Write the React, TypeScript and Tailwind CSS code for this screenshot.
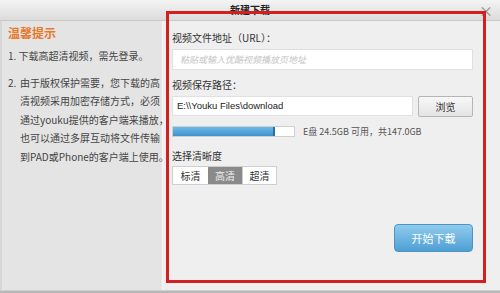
import React from "react";

const cjk = { fontFamily: '"Noto Sans CJK SC", "Noto Sans", sans-serif' };
const sans = { fontFamily: '"Liberation Sans", "Noto Sans CJK SC", sans-serif' };

export default function App() {
  return (
    <div
      className="relative w-[500px] h-[293px] overflow-hidden bg-[#efefef] flex flex-col text-[#333]"
      style={cjk}
    >
      {/* title bar */}
      <div className="h-[21px] shrink-0 flex items-center justify-center border-b border-[#c9c9c9] bg-gradient-to-b from-[#f4f4f4] to-[#dcdcdc] relative">
        <span className="text-[10px] font-bold text-[#222] leading-none">新建下载</span>
        <span className="absolute right-[7px] top-[3px] text-[14px] leading-none text-[#8a8a8a]">×</span>
      </div>

      <div className="flex flex-1 min-h-0">
        {/* left panel */}
        <div className="w-[163px] shrink-0 bg-[#e4e4e4] border-r border-[#f7f7f7] border-l-[2px] border-l-[#d6d6d6] pl-[6px] pt-[3px]">
          <div className="text-[12px] font-bold text-[#e8782a] leading-[17px]">温馨提示</div>
          <div className="text-[10px] leading-[18.5px] text-[#444] mt-[6px] whitespace-nowrap">1. 下载高超清视频，需先登录。</div>
          <div className="text-[10px] leading-[18.5px] text-[#444] mt-[8px] flex whitespace-nowrap">
            <span className="w-[12px] shrink-0">2.</span>
            <div className="flex flex-col">
              <span>由于版权保护需要，您下载的高</span>
              <span>清视频采用加密存储方式，必须</span>
              <span>通过youku提供的客户端来播放，</span>
              <span>也可以通过多屏互动将文件传输</span>
              <span>到PAD或Phone的客户端上使用。</span>
            </div>
          </div>
        </div>

        {/* right panel */}
        <div className="flex-1 flex flex-col pl-[9px] pr-[27px] pt-[10px]">
          <div className="text-[10px] leading-[14px] text-[#333]">视频文件地址（URL）：</div>
          <div className="mt-[4px] h-[21px] bg-white border border-[#e0e0e0] flex items-center pl-[7px]">
            <span className="text-[9px] italic text-[#c4c4c4]">粘贴或输入优酷视频播放页地址</span>
          </div>

          <div className="mt-[8px] text-[10px] leading-[14px] text-[#333]">视频保存路径：</div>
          <div className="mt-[4px] flex gap-[5px]">
            <div className="flex-1 h-[20px] bg-white border border-[#e0e0e0] flex items-center pl-[4px]">
              <span className="text-[9.5px] text-[#222]" style={sans}>E:\\Youku Files\download</span>
            </div>
            <div className="w-[55px] h-[21px] border border-[#b5b5b5] rounded-[2px] bg-gradient-to-b from-[#f8f8f8] to-[#e4e4e4] flex items-center justify-center text-[10px] text-[#333]">
              浏览
            </div>
          </div>

          <div className="mt-[8px] flex items-center gap-[8px]">
            <div className="w-[123px] h-[11px] border border-[#cfcfcf] bg-white flex">
              <div className="w-[102px] h-full bg-gradient-to-b from-[#6db8e4] to-[#3d93cf] border-r-2 border-[#2f6f9c]" />
            </div>
            <span className="text-[9px] text-[#555]">E盘 24.5GB 可用，共147.0GB</span>
          </div>

          <div className="mt-[10px] text-[10px] leading-[14px] text-[#333]">选择清晰度</div>
          <div className="mt-[3px] flex h-[19px] w-[105px] border border-[#cfcfcf] text-[10px]">
            <div className="w-[35px] bg-white flex items-center justify-center text-[#333]">标清</div>
            <div className="w-[34px] bg-[#8a8a8a] flex items-center justify-center text-[#eee]">高清</div>
            <div className="flex-1 bg-white border-l border-[#cfcfcf] flex items-center justify-center text-[#333]">超清</div>
          </div>

          <div className="flex-1" />
          <div className="flex justify-end mb-[38px]">
            <div className="w-[79px] h-[28px] rounded-[4px] border border-[#4e95c4] bg-gradient-to-b from-[#8fcbee] to-[#4e9fd3] flex items-center justify-center text-[11px] text-white">
              开始下载
            </div>
          </div>
        </div>
      </div>

      {/* bottom window edge */}
      <div className="h-[3px] shrink-0 bg-[#b8b8b8] border-t border-[#d0d0d0]" />

      {/* red annotation rectangle */}
      <div className="absolute left-[166px] top-[11px] w-[320px] h-[272px] border-[3px] border-[#d21f1f] pointer-events-none" />
    </div>
  );
}
